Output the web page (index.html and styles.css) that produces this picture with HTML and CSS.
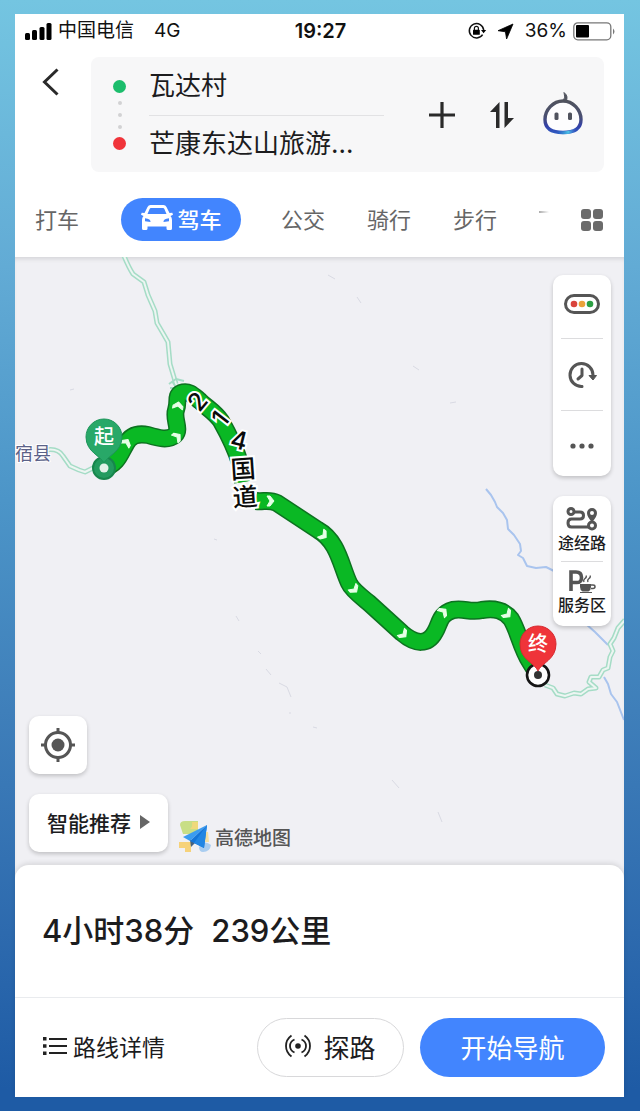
FILE: index.html
```html
<!DOCTYPE html>
<html lang="zh-CN">
<head>
<meta charset="utf-8">
<meta name="viewport" content="width=device-width, initial-scale=1">
<title>路线规划</title>
<link rel="stylesheet" href="styles.css">
</head>
<body>
<div class="phone">
  <div class="status">
    <div class="status-left">
      <svg class="signal" width="27" height="17" viewBox="0 0 27 17" aria-hidden="true"><rect x="0" y="10" width="5" height="7" rx="1.5"/><rect x="7" y="7" width="5" height="10" rx="1.5"/><rect x="14.500" y="4" width="5" height="13" rx="1.5"/><rect x="21.500" y="0" width="5" height="17" rx="1.5"/></svg>
      <span>中国电信</span>
      <span class="network">4G</span>
    </div>
    <time class="clock">19:27</time>
    <div class="status-right">
      <svg width="18" height="18" viewBox="0 0 18 18" aria-hidden="true"><path d="M14.600 12.600A7.200 7.200 0 1 1 15.700 8" fill="none" stroke="#111" stroke-width="1.500"/><path d="M13 8h5.200l-2.600 3.300z"/><rect x="5" y="7.800" width="6.800" height="5" rx=".6"/><path d="M6.400 8V6.300a2 2 0 0 1 4 0V8" fill="none" stroke="#111" stroke-width="1.200"/></svg>
      <svg class="locating" width="15" height="15" viewBox="0 0 15 15" aria-hidden="true"><path d="M15 0L8.600 15 7.400 7.800 0 6.700z" stroke="#000" stroke-width=".8"/></svg>
      <span>36%</span>
      <svg width="43" height="19" viewBox="0 0 43 19" aria-hidden="true"><rect x=".8" y=".8" width="37" height="17" rx="4" fill="#fff" stroke="#777" stroke-width="1.300"/><rect x="3" y="3" width="13" height="12.600" rx="1"/><path d="M40 6.500q3 3 0 6z" fill="#777"/></svg>
    </div>
  </div>

  <header class="header">
    <button class="back" aria-label="返回"><svg width="18" height="28" viewBox="0 0 18 28"><path d="M15.500 1.500L2.500 14l13 12.500" fill="none" stroke="#2a2a2a" stroke-width="3"/></svg></button>
    <form class="route-card">
      <div class="route-dots" aria-hidden="true"><i class="dot start"></i><i class="step"></i><i class="step"></i><i class="step"></i><i class="dot end"></i></div>
      <div class="fields">
        <input class="field" type="text" aria-label="起点" value="瓦达村">
        <input class="field" type="text" aria-label="终点" value="芒康东达山旅游…">
      </div>
      <div class="card-actions">
        <button type="button" aria-label="添加途经点"><svg width="26" height="26" viewBox="0 0 26 26"><path d="M13 0v26M0 13h26" stroke="#2a2a2a" stroke-width="3.200"/></svg></button>
        <button type="button" aria-label="交换起终点"><svg width="26" height="26" viewBox="0 0 26 26"><path d="M10.500 26H7V10H1L10.500 0zM15.500 0H19v16h6L15.500 26z" fill="#2a2a2a"/></svg></button>
        <button type="button" aria-label="语音助手"><svg width="40" height="44" viewBox="0 0 40 44"><defs><linearGradient id="face" x1="0" y1="0" x2="0" y2="1"><stop offset="0" stop-color="#50535e"/><stop offset=".5" stop-color="#4a4f72"/><stop offset=".8" stop-color="#3340a8"/><stop offset="1" stop-color="#2f58c0"/></linearGradient><linearGradient id="shine" x1="0" x2="1"><stop offset="0" stop-color="#39d" stop-opacity="0"/><stop offset=".6" stop-color="#4ac3e6"/><stop offset="1" stop-color="#4a7de0" stop-opacity="0"/></linearGradient></defs><path d="M20 8C10 8 2 17 2 26.500 2 36 9 39.500 20 39.500S38 36 38 26.500C38 17 30 8 20 8z" fill="#fdfdfe" stroke="url(#face)" stroke-width="3.400"/><path d="M14 39.300q13 1.500 19-3.200" fill="none" stroke="url(#shine)" stroke-width="3"/><path d="M20 8q3-3.500 1-8.500 5 4 1.800 9z" fill="#50535e" stroke="#50535e"/><rect x="11.500" y="19.500" width="4" height="7.500" rx="1.500" fill="#50535e"/><rect x="25" y="19.500" width="4" height="7.500" rx="1.500" fill="#50535e"/></svg></button>
      </div>
    </form>
  </header>

  <nav class="tabs">
    <button class="tab">打车</button>
    <button class="tab active"><svg width="32" height="26" viewBox="0 0 32 26" aria-hidden="true"><path fill-rule="evenodd" d="M9.500 0h13q2 0 3 2l3 6 2.800-.3.700 2-2.500 1.300q1.500 1.500 1.500 4V23.500q0 1.500-1.500 1.500h-2.500q-1.500 0-1.500-1.500V21.500h-19V23.500Q6.500 25 5 25H2.500Q1 25 1 23.500V15q0-2.500 1.500-4L0 9.700l.7-2L3.500 8l3-6q1-2 3-2zm.5 3q-1 0-1.400 1L6.500 9h19L23.400 4Q23 3 22 3zM4 13.200v3l5.500.8q.5-3-5.500-3.800zm24 0q-6 .8-5.500 3.800l5.500-.8z" fill="#fff"/></svg>驾车</button>
    <button class="tab">公交</button>
    <button class="tab">骑行</button>
    <button class="tab">步行</button>
    <i class="tab-peek" aria-hidden="true"></i>
    <button class="more-modes" aria-label="全部出行方式"><i></i><i></i><i></i><i></i></button>
  </nav>

  <main class="map">
    <svg class="map-canvas" viewBox="15 257 609 624" preserveAspectRatio="xMidYMid slice" role="img" aria-label="路线地图">
      <g class="river">
        <path d="M486 489l5 6 4 7 2 5 6 6 4 7 1 9 6 6 6 9 1 7-3 4 5 3 4 8 9 2 10-1 8 4 10 5"/>
        <path d="M586 624l9 8 13 13M604 677l4 7 3 10 6 8 7 18"/>
      </g>
      <g class="road">
        <path d="M124 256q5 12 9 18l11 8 4 13 7 16 2 12 7 12 4 7 2 22 6 20"/>
        <path d="M46 450q12-2 17 6l7 10 9 4 6 2 8-4 11-1"/>
        <path d="M545 685l8 3 4 6 8 2 9-3 7 1 7-5 8-1-7-6 2-5 8 0 4-7 5-2 2-11 3-6-3-7 4-6 4-10 7-8"/>
      </g>
      <g class="road-core">
        <path d="M124 256q5 12 9 18l11 8 4 13 7 16 2 12 7 12 4 7 2 22 6 20"/>
        <path d="M46 450q12-2 17 6l7 10 9 4 6 2 8-4 11-1"/>
        <path d="M545 685l8 3 4 6 8 2 9-3 7 1 7-5 8-1-7-6 2-5 8 0 4-7 5-2 2-11 3-6-3-7 4-6 4-10 7-8"/>
      </g>
      <path class="road-mark" d="M169 384l7-5 8 2M170 388h14M172 381l5 8"/>
      <path class="trace" d="M38 448l3 2M70 390l4-1M413 366l6 4M450 403l6-1M214 539l3 1M236 616l3 5M258 651l3 3M266 669l5 6M279 683l8 4 4 10M290 712v2M313 727l4 1M392 780l7 8M438 812l4 10M328 275l7 4M357 297l4 6"/>
      <path class="route-edge" d="M104 468C118 464 120 454 126 444C130 436 137 433 148 435C158 438 168 441 175 435C181 429 173 419 176 410C179 402 175 396 181 393C189 390 194 396 200 401C207 408 215 412 221 421C230 437 236 450 240 463L243 482M256 501C264 502 269 499 277 503L318 530C338 541 341 566 349 583C352 590 363 598 369 603L402 633C416 645 428 645 435 632C440 624 439 614 453 610C465 608 470 613 482 610C495 608 504 610 511 619C518 630 521 648 530 662L538 675"/>
      <path class="route" d="M104 468C118 464 120 454 126 444C130 436 137 433 148 435C158 438 168 441 175 435C181 429 173 419 176 410C179 402 175 396 181 393C189 390 194 396 200 401C207 408 215 412 221 421C230 437 236 450 240 463L243 482M256 501C264 502 269 499 277 503L318 530C338 541 341 566 349 583C352 590 363 598 369 603L402 633C416 645 428 645 435 632C440 624 439 614 453 610C465 608 470 613 482 610C495 608 504 610 511 619C518 630 521 648 530 662L538 675"/>
      <g class="chevrons">
        <path transform="translate(126 443) rotate(-60)" d="M-3-5L0-5 4 0 0 5-3 5 0 0z"/>
        <path transform="translate(177 437) rotate(-40)" d="M-3-5L0-5 4 0 0 5-3 5 0 0z"/>
        <path transform="translate(178 406) rotate(-80)" d="M-3-5L0-5 4 0 0 5-3 5 0 0z"/>
        <path transform="translate(270 501)" d="M-3-5L0-5 4 0 0 5-3 5 0 0z"/>
        <path transform="translate(323 535) rotate(38)" d="M-3-5L0-5 4 0 0 5-3 5 0 0z"/>
        <path transform="translate(354 589) rotate(50)" d="M-3-5L0-5 4 0 0 5-3 5 0 0z"/>
        <path transform="translate(403 634) rotate(45)" d="M-3-5L0-5 4 0 0 5-3 5 0 0z"/>
        <path transform="translate(443 612) rotate(-45)" d="M-3-5L0-5 4 0 0 5-3 5 0 0z"/>
        <path transform="translate(507 614) rotate(45)" d="M-3-5L0-5 4 0 0 5-3 5 0 0z"/>
      </g>
      <g class="road-name">
        <text transform="translate(198 402) rotate(-50)" y="8">2</text>
        <text transform="translate(221 419) rotate(-52)" y="8">1</text>
        <text transform="translate(239 441) rotate(14)" y="8">4</text>
        <text transform="translate(243 469) rotate(-4)" y="9">国</text>
        <text transform="translate(245 497) rotate(-4)" y="9">道</text>
      </g>
      <text class="place" x="15" y="460">宿县</text>
      <circle cx="104" cy="468" r="11" fill="#239b5f" stroke="#17864c" stroke-width="2"/>
      <path d="M104 463C101 456 86 452 86 437A18 18 0 0 1 122 437C122 452 107 456 104 463z" fill="#28a868" stroke="#1d955a"/>
      <circle cx="104" cy="468" r="4.500" fill="#e3f2e9"/>
      <text class="pin-label" x="104" y="444">起</text>
      <circle cx="538" cy="675" r="11" fill="#fff" stroke="#151515" stroke-width="2.600"/>
      <circle cx="538" cy="675" r="4" fill="#333"/>
      <path d="M538 671C535 663 520 660 520 644A18 18 0 0 1 556 644C556 660 541 663 538 671z" fill="#ef3439" stroke="#d62a30"/>
      <text class="pin-label" x="538" y="651">终</text>
    </svg>

    <div class="overlay">
      <div class="side-left">
        <button class="locate" aria-label="定位"><svg width="34" height="34" viewBox="0 0 34 34"><circle cx="17" cy="17" r="12.500" fill="none" stroke="#555" stroke-width="3"/><circle cx="17" cy="17" r="6.500" fill="#555"/><path d="M17 0v5M17 29v5M0 17h5M29 17h5" stroke="#555" stroke-width="3"/></svg></button>
        <div class="pref-row">
          <button class="pref">智能推荐<svg width="10" height="14" viewBox="0 0 10 14" aria-hidden="true"><path d="M0 0l10 7-10 7z" fill="#666"/></svg></button>
          <div class="brand"><svg width="32" height="32" viewBox="0 0 32 32" aria-hidden="true"><path d="M1 5q0-4 5-4h13v8q0 5-5 5H4z" fill="#c8de86"/><path d="M0 22h12v10H6v-4H0z" fill="#f6d27a"/><path d="M13 2h6v7h-8q3-2 2-7z" fill="#f0d97c"/><path d="M20 27q5-8 12-2-1 7-8 7-4 0-4-5z" fill="#a9cdf0"/><path d="M23 12h6l1 10h-8z" fill="#f3dfa2"/><path d="M28 5L4 17l7 4z" fill="#3a9cf0"/><path d="M11 20l1 7 4-4z" fill="#45617f"/><path d="M28 5L11 21l14 7z" fill="#1375d8"/><path d="M28 5L15 23l10 5z" fill="#2186e4"/></svg><span>高德地图</span></div>
        </div>
      </div>
      <div class="side-right">
        <div class="tools">
          <button class="traffic" aria-label="路况"><svg width="36" height="20" viewBox="0 0 36 20"><rect x="1.500" y="1.500" width="33" height="17" rx="8.500" fill="#fff" stroke="#555" stroke-width="3"/><circle cx="10" cy="10" r="3.300" fill="#d9443c"/><circle cx="18" cy="10" r="3.300" fill="#eba23a"/><circle cx="26" cy="10" r="3.300" fill="#2b9f43"/></svg></button>
          <button class="depart" aria-label="出发时间"><svg width="28" height="26" viewBox="0 0 28 26"><path d="M14 24.500A11.500 11.500 0 1 1 25 13v1" fill="none" stroke="#555" stroke-width="3" stroke-linecap="round"/><path d="M14 7v6.500L10 17" fill="none" stroke="#555" stroke-width="3" stroke-linecap="round" stroke-linejoin="round"/><path d="M21 13.500h7.500L25 18z" fill="#555" stroke="#555"/></svg></button>
          <button class="more" aria-label="更多"><svg width="24" height="6" viewBox="0 0 24 6"><circle cx="3" cy="3" r="2.600" fill="#555"/><circle cx="12" cy="3" r="2.600" fill="#555"/><circle cx="21" cy="3" r="2.600" fill="#555"/></svg></button>
        </div>
        <div class="tools captioned">
          <button><svg width="32" height="24" viewBox="0 0 32 24" aria-hidden="true"><g fill="none" stroke="#555" stroke-width="3"><circle cx="5" cy="4.500" r="3"/><path d="M8 5h6q3.500 0 3.500 3.500T14 12H5.500Q2 12 2 16t3.500 4H23"/><circle cx="26" cy="18.500" r="3.500"/></g><path fill-rule="evenodd" d="M26 15q-5-5-5-9a5 5 0 0 1 10 0q0 4-5 9zm0-11a2 2 0 1 0 0 4 2 2 0 0 0 0-4z" fill="#555"/></svg>途经路</button>
          <button><svg width="28" height="24" viewBox="0 0 28 24" aria-hidden="true"><path d="M3 22V3H8Q13.500 3 13.500 8.500T8 13.500H3" fill="none" stroke="#555" stroke-width="3.600"/><path d="M12 15h11v3q0 3-2.500 4.500h-6Q12 21 12 18z" fill="#555"/><path d="M12 23.500h12" stroke="#555"/><path d="M23 16h2q2 0 2 1.700T25 19.500h-2" fill="none" stroke="#555" stroke-width="1.500"/><path d="M16 13q-1-2 1-3.500t1-3M20 13q-1-2 1-3.500t1-3" fill="none" stroke="#555" stroke-width="1.300"/></svg>服务区</button>
        </div>
      </div>
    </div>
  </main>

  <section class="sheet">
    <h1 class="summary"><span>4小时38分</span><span>239公里</span></h1>
    <div class="actions">
      <button class="detail"><svg width="24" height="18" viewBox="0 0 24 18" aria-hidden="true"><path d="M6 2h18M6 9h18M6 16h18" stroke="#222" stroke-width="1.800"/><path d="M0 0h3.500v3.500H0zM0 7.200h3.500v3.500H0zM0 14.500h3.500V18H0z" fill="#222"/></svg>路线详情</button>
      <button class="explore"><svg width="26" height="22" viewBox="0 0 26 22" aria-hidden="true"><circle cx="13" cy="11" r="2.800" fill="#222"/><path d="M9.500 4.500Q5 6.500 5 11t4.500 6.500M16.500 4.500Q21 6.500 21 11t-4.500 6.500M6.500.5Q1 4.500 1 11t5.500 10.500M19.500.5Q25 4.500 25 11t-5.500 10.500" fill="none" stroke="#222" stroke-width="1.800"/></svg>探路</button>
      <button class="go">开始导航</button>
    </div>
  </section>
</div>
</body>
</html>
```
FILE: styles.css
```css
* { box-sizing: border-box; }

body {
  margin: 0;
  min-height: 100vh;
  display: flex;
  padding: 14px 16px 14px 15px;
  background: linear-gradient(#74c5e1 0%, #62abd5 24%, #4c95c8 45%, #3f7fba 64%, #2d6aae 84%, #1e5ba5 98%);
  font-family: Inter, "Noto Sans CJK SC", sans-serif;
  color: #1c1c1e;
}

button {
  margin: 0;
  padding: 0;
  border: 0;
  background: none;
  color: inherit;
  font: inherit;
  display: flex;
  align-items: center;
  justify-content: center;
}

svg { display: block; flex: none; overflow: visible; }

.phone {
  flex: 1;
  min-width: 0;
  display: flex;
  flex-direction: column;
  background: #fff;
}

/* Status bar */
.status {
  display: grid;
  grid-template-columns: 1fr auto 1fr;
  align-items: center;
  height: 34px;
  padding: 0 8px 0 10px;
  font-size: 19px;
  line-height: 24px;
  color: #111;
}
.status-left, .status-right { display: flex; align-items: center; gap: 6px; }
.status-right { justify-content: flex-end; }
.network { margin-left: 14px; }
.locating { margin: 0 6px; }
.clock { font-size: 20px; font-weight: 600; }

/* Start and end points */
.header { display: flex; align-items: flex-start; padding: 9px 20px 0 0; }
.back { width: 72px; height: 50px; margin-right: 4px; }
.route-card {
  flex: 1;
  min-width: 0;
  display: flex;
  align-items: center;
  height: 115px;
  padding: 0 21px 0 22px;
  border-radius: 8px;
  background: #f7f7f8;
}
.route-dots { display: flex; flex-direction: column; align-items: center; gap: 8px; width: 13px; }
.dot { width: 13px; height: 13px; border-radius: 50%; }
.start { background: #1cbd6c; }
.end { background: #f0343a; }
.step { width: 4px; height: 4px; border-radius: 50%; background: #d2d2d4; }
.fields { flex: 1; min-width: 0; margin: 0 45px 0 23px; }
.field {
  display: block;
  width: 100%;
  height: 58px;
  padding: 0 0 5px;
  border: 0;
  background: none;
  color: #1c1c1e;
  font: 26px/36px Inter, "Noto Sans CJK SC", sans-serif;
  text-overflow: ellipsis;
}
.field + .field { border-top: 1px solid #e2e2e4; }
.card-actions { display: flex; align-items: center; gap: 34px; }
.card-actions button:last-child { margin-left: -6px; }

/* Travel modes */
.tabs { display: flex; align-items: center; gap: 42px; padding: 26px 21px 16px 20px; }
.tab { flex: none; height: 43px; padding-bottom: 3px; font-size: 22px; color: #666; }
.active {
  gap: 5px;
  width: 120px;
  margin: 0 -2px 0 0;
  border-radius: 22px;
  background: #4285fe;
  color: #fff;
  font-weight: 500;
}
.tab-peek { flex: none; width: 10px; height: 2px; margin: 0 auto 16px 0; background: linear-gradient(90deg, #aaa, #fff); }
.more-modes { display: grid; grid-template-columns: 10px 10px; gap: 2px; margin-left: -12px; }
.more-modes i { height: 10px; border-radius: 3px; background: #6b6b6b; }

/* Map */
.map {
  position: relative;
  flex: 1;
  display: flex;
  background: #f0f0f4;
  box-shadow: inset 0 4px 4px -2px #d4d4d8;
}
.map-canvas { position: absolute; inset: 0; width: 100%; height: 100%; overflow: hidden; }
.map-canvas path { stroke-linejoin: round; }
.river { fill: none; stroke: #a9c4ee; stroke-width: 2; }
.road { fill: none; stroke: #a5dcc6; stroke-width: 5; }
.road-core { fill: none; stroke: #edf5f2; stroke-width: 2; }
.road-mark { fill: none; stroke: #a5dcc6; stroke-width: 2; }
.trace { fill: none; stroke: #d9dae3; stroke-width: 1; }
.route-edge { fill: none; stroke: #0d7220; stroke-width: 18; }
.route { fill: none; stroke: #0ab824; stroke-width: 15; }
.chevrons { fill: #e6ffe6; stroke: #e6ffe6; stroke-width: 1; }
.road-name {
  font-size: 25px;
  font-weight: 500;
  text-anchor: middle;
  fill: #0b0b0b;
  stroke: #fff;
  stroke-width: 4px;
  paint-order: stroke;
}
.place { font-size: 18px; fill: #5b6288; stroke: #fff; stroke-width: 2px; paint-order: stroke; }
.pin-label { font-size: 20px; font-weight: 500; text-anchor: middle; fill: #fff; }

.overlay {
  position: relative;
  flex: 1;
  display: flex;
  justify-content: space-between;
  padding: 18px 13px 29px 14px;
}
.side-left { display: flex; flex-direction: column; justify-content: flex-end; gap: 20px; }
.side-right { display: flex; flex-direction: column; gap: 20px; width: 58px; }
.locate, .pref, .tools { border-radius: 10px; background: #fff; box-shadow: 0 2px 4px #0003; }
.locate { width: 58px; height: 58px; }
.pref-row { display: flex; align-items: flex-end; gap: 11px; }
.pref { gap: 9px; width: 139px; height: 58px; padding-bottom: 2px; font-size: 21px; font-weight: 500; }
.brand { display: flex; align-items: center; gap: 4px; font-size: 19px; font-weight: 500; color: #555; }
.tools button { width: 100%; }
.tools button + button { background: linear-gradient(#dcdcde, #dcdcde) top / 42px 1px no-repeat; }
.tools .traffic { height: 63px; padding-bottom: 6px; }
.tools .depart { height: 72px; padding-top: 2px; }
.tools .more { height: 66px; padding-top: 6px; }
.captioned button {
  flex-direction: column;
  gap: 2px;
  height: 65px;
  padding-top: 2px;
  font-size: 16px;
  line-height: 20px;
  font-weight: 500;
}
.captioned button + button { padding: 0 0 4px; }

/* Bottom sheet */
.sheet {
  position: relative;
  margin-top: -16px;
  border-radius: 14px 14px 0 0;
  background: #fff;
  box-shadow: 0 -2px 5px #0000001a;
}
.summary {
  display: flex;
  align-items: center;
  gap: 17px;
  height: 132px;
  margin: 0;
  padding: 0 27px;
  font-size: 31px;
  line-height: 40px;
  font-weight: 500;
}
.actions {
  display: flex;
  align-items: center;
  gap: 16px;
  height: 100px;
  padding: 0 19px 0 28px;
  border-top: 1px solid #e9ebee;
}
.actions button { padding-bottom: 3px; }
.detail { gap: 6px; margin-right: auto; font-size: 23px; }
.explore, .go { height: 59px; border-radius: 30px; font-size: 26px; }
.explore { gap: 12px; width: 147px; border: 1px solid #d8d8da; }
.go { width: 185px; background: #4285fe; color: #fff; }
```
